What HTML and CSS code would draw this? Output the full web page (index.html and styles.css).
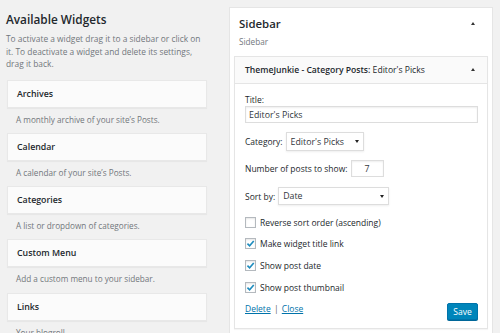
FILE: index.html
```html
<!DOCTYPE html>
<html>
<head>
<meta charset="utf-8">
<link rel="stylesheet" href="styles.css">
</head>
<body>
<div class="page">
  <section class="available">
    <h3 class="avail-title">Available Widgets</h3>
    <p class="avail-desc">To activate a widget drag it to a sidebar or click on it. To deactivate a widget and delete its settings, drag it back.</p>
    <div class="widget-list">
      <div class="wbox">Archives</div>
      <div class="wdesc">A monthly archive of your site’s Posts.</div>
      <div class="wbox">Calendar</div>
      <div class="wdesc">A calendar of your site’s Posts.</div>
      <div class="wbox">Categories</div>
      <div class="wdesc">A list or dropdown of categories.</div>
      <div class="wbox">Custom Menu</div>
      <div class="wdesc">Add a custom menu to your sidebar.</div>
      <div class="wbox">Links</div>
      <div class="wdesc">Your blogroll</div>
    </div>
  </section>

  <section class="sidebar">
    <div class="sb-head">
      <h2 class="sb-title">Sidebar</h2>
      <span class="tri"></span>
    </div>
    <div class="sb-desc">Sidebar</div>

    <div class="widget">
      <div class="widget-top">
        <span class="widget-title"><strong>ThemeJunkie - Category Posts:</strong> Editor's Picks</span>
        <span class="tri"></span>
      </div>
      <div class="widget-body">
        <div class="field-label">Title:</div>
        <input class="text-input" type="text" value="Editor's Picks">

        <div class="row row-cat">
          <span>Category:</span>
          <span class="select sel-cat"><span>Editor's Picks</span><span class="caret"></span></span>
        </div>

        <div class="row row-num">
          <span>Number of posts to show:</span>
          <span class="num-input">7</span>
        </div>

        <div class="row row-sort">
          <span>Sort by:</span>
          <span class="select sel-sort"><span>Date</span><span class="caret"></span></span>
        </div>

        <div class="checks">
          <div class="check"><span class="cbox"></span><span>Reverse sort order (ascending)</span></div>
          <div class="check"><span class="cbox"><svg viewBox="0 0 10 10" width="9" height="9"><path d="M1.6 5.2 L4 7.6 L8.6 2.2" fill="none" stroke="#1e8cbe" stroke-width="1.8"/></svg></span><span>Make widget title link</span></div>
          <div class="check"><span class="cbox"><svg viewBox="0 0 10 10" width="9" height="9"><path d="M1.6 5.2 L4 7.6 L8.6 2.2" fill="none" stroke="#1e8cbe" stroke-width="1.8"/></svg></span><span>Show post date</span></div>
          <div class="check"><span class="cbox"><svg viewBox="0 0 10 10" width="9" height="9"><path d="M1.6 5.2 L4 7.6 L8.6 2.2" fill="none" stroke="#1e8cbe" stroke-width="1.8"/></svg></span><span>Show post thumbnail</span></div>
        </div>

        <div class="actions">
          <div class="links"><a href="#">Delete</a> <span class="sep">|</span> <a href="#">Close</a></div>
          <button class="save">Save</button>
        </div>
      </div>
    </div>
  </section>
</div>
</body>
</html>
```

FILE: styles.css
```css
* { box-sizing: border-box; }
html, body { margin: 0; padding: 0; }
body {
  background: #f1f1f1;
  font-family: "Open Sans", "Noto Sans", sans-serif;
  font-size: 8.5px;
  color: #444;
  width: 500px;
  height: 333px;
  overflow: hidden;
}
.page {
  display: flex;
  align-items: flex-start;
  padding-top: 7px;
}
.available {
  width: 207px;
  padding-left: 6px;
  margin-right: 22px;
}
.avail-title {
  margin: 4px 0 0;
  font-size: 11.8px;
  font-weight: 600;
  color: #23282d;
  line-height: 16px;
}
.avail-desc {
  margin: 6px 0 0 0;
  color: #72777c;
  line-height: 12.5px;
  font-size: 8.4px;
}
.widget-list { margin-top: 9px; padding-left: 1px; }
.wbox {
  height: 28px;
  background: #fbfbfb;
  border: 1px solid #e8e8e8;
  box-shadow: 0 1px 1px rgba(0,0,0,.04);
  padding-left: 9px;
  display: flex;
  align-items: center;
  font-weight: 600;
  font-size: 8.8px;
  color: #23282d;
}
.wdesc {
  padding: 6px 0 7px 9px;
  line-height: 12.25px;
  font-size: 8.2px;
  color: #72777c;
}

.sidebar {
  width: 264px;
  height: 340px;
  background: #fff;
  border: 1px solid #e5e5e5;
  padding: 0 4px;
}
.sb-head {
  display: flex;
  align-items: center;
  justify-content: space-between;
  padding: 9px 13px 0 5px;
}
.sb-title {
  margin: 0;
  font-size: 11.4px;
  font-weight: 600;
  color: #23282d;
  line-height: 14px;
}
.tri {
  width: 0;
  height: 0;
  border-left: 2.5px solid transparent;
  border-right: 2.5px solid transparent;
  border-bottom: 3px solid #333;
  margin-top: -2px;
}
.sb-desc {
  padding: 5px 0 0 5px;
  color: #72777c;
  font-size: 8.2px;
  line-height: 12px;
}
.widget {
  margin-top: 8px;
  border: 1px solid #e5e5e5;
  box-shadow: 0 1px 1px rgba(0,0,0,.04);
}
.widget-top {
  height: 27px;
  background: #fafafa;
  border-bottom: 1px solid #e5e5e5;
  display: flex;
  align-items: center;
  justify-content: space-between;
  padding: 0 12px 0 10px;
  color: #23282d;
  font-size: 8.6px;
}
.widget-title strong { font-weight: 600; }
.widget-body {
  padding: 10px 9px 8px 10px;
  color: #23282d;
}
.field-label { line-height: 12px; }
.text-input {
  display: block;
  width: 100%;
  height: 17px;
  margin: 0;
  border: 1px solid #ddd;
  box-shadow: inset 0 1px 2px rgba(0,0,0,.07);
  padding: 0 3px;
  font-family: inherit;
  font-size: 8.8px;
  color: #32373c;
  outline: none;
}
.row {
  display: flex;
  align-items: center;
  gap: 3px;
}
.row-cat { margin-top: 9px; }
.row-num { margin-top: 9px; }
.row-sort { margin-top: 10px; }
.select {
  display: flex;
  align-items: center;
  justify-content: space-between;
  border: 1px solid #ddd;
  box-shadow: 0 1px 2px rgba(0,0,0,.07);
  padding: 0 4px 0 4px;
  background: #fff;
  color: #32373c;
  font-size: 8.8px;
}
.sel-cat { width: 78px; height: 19px; }
.sel-sort { width: 111px; height: 18px; }
.caret {
  width: 0;
  height: 0;
  border-left: 2px solid transparent;
  border-right: 2px solid transparent;
  border-top: 3px solid #222;
}
.num-input {
  width: 33px;
  height: 17px;
  border: 1px solid #ddd;
  box-shadow: inset 0 1px 2px rgba(0,0,0,.07);
  display: flex;
  align-items: center;
  justify-content: center;
  color: #32373c;
  font-size: 8.8px;
}
.checks {
  margin-top: 11px;
  display: flex;
  flex-direction: column;
  gap: 9.8px;
}
.check {
  display: flex;
  align-items: center;
  gap: 4px;
  height: 12px;
}
.cbox {
  width: 11px;
  height: 11px;
  border: 1px solid #b4b9be;
  box-shadow: inset 0 1px 2px rgba(0,0,0,.1);
  background: #fff;
  display: flex;
  align-items: center;
  justify-content: center;
}
.actions {
  margin-top: 10px;
  display: flex;
  justify-content: space-between;
  align-items: flex-start;
}
.links { line-height: 12px; color: #555; }
.links a { color: #0073aa; }
.sep { color: #666; padding: 0 1px; }
.save {
  width: 31px;
  height: 17px;
  margin: 0;
  padding: 0;
  background: #0085ba;
  border: 1px solid #0073aa;
  border-radius: 2px;
  box-shadow: 0 1px 0 #006799;
  color: #fff;
  font-family: inherit;
  font-size: 8.5px;
}
```
